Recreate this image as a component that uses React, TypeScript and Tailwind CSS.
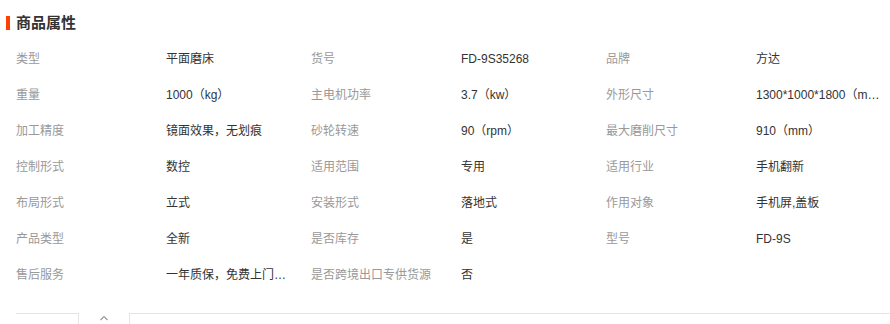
const font = "font-['Microsoft_YaHei','Liberation_Sans','Noto_Sans_CJK_SC',sans-serif]";

const rows: [string, string][][] = [
  [["类型", "平面磨床"], ["货号", "FD-9S35268"], ["品牌", "方达"]],
  [["重量", "1000（kg）"], ["主电机功率", "3.7（kw）"], ["外形尺寸", "1300*1000*1800（mm）"]],
  [["加工精度", "镜面效果，无划痕"], ["砂轮转速", "90（rpm）"], ["最大磨削尺寸", "910（mm）"]],
  [["控制形式", "数控"], ["适用范围", "专用"], ["适用行业", "手机翻新"]],
  [["布局形式", "立式"], ["安装形式", "落地式"], ["作用对象", "手机屏,盖板"]],
  [["产品类型", "全新"], ["是否库存", "是"], ["型号", "FD-9S"]],
  [["售后服务", "一年质保，免费上门安装"], ["是否跨境出口专供货源", "否"], ["", ""]],
];

export default function App() {
  return (
    <div className={`w-[890px] h-[324px] bg-white overflow-hidden ${font}`}>
      <div className="flex items-center h-[22px] mt-[12px]">
        <span className="w-[4px] h-[14px] bg-[#ff4000] ml-[6px]" />
        <span className="ml-[6px] text-[15px] font-bold text-[#333]">商品属性</span>
      </div>
      <div className="mt-[7px] pl-[16px]">
        {rows.map((row, i) => (
          <div key={i} className="flex h-[36px] items-center text-[12px]">
            {row.map(([k, v], j) => (
              <div key={j} className="flex">
                <div className="w-[150px] text-[#999] whitespace-nowrap">{k}</div>
                <div className="w-[145px] pr-[20px]">
                  <div className="truncate text-[#333]">{v}</div>
                </div>
              </div>
            ))}
          </div>
        ))}
      </div>
      <div className="flex mt-[20px] ml-[16px] h-[20px]">
        <div className="w-[63px] border-t border-r border-[#e5e5e5]" />
        <div className="w-[50px] flex justify-center pt-[2px]">
          <svg width="10" height="6" viewBox="0 0 10 6" fill="none" stroke="#999" strokeWidth="1.2">
            <path d="M1.5 5L5 1.5L8.5 5" />
          </svg>
        </div>
        <div className="w-[761px] border-t border-l border-[#e5e5e5]" />
      </div>
    </div>
  );
}
